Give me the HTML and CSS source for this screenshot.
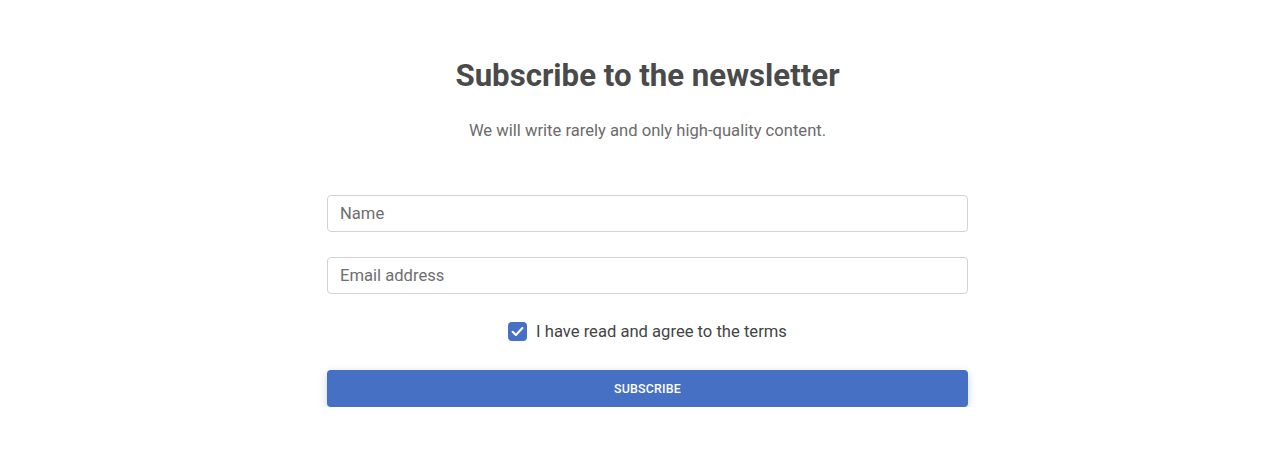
FILE: index.html
```html
<!DOCTYPE html>
<html lang="en">
<head>
  <meta charset="UTF-8">
  <title>Newsletter</title>
  <link rel="stylesheet" href="styles.css">
</head>
<body>
  <div class="container">
    <h1 class="title">Subscribe to the newsletter</h1>
    <p class="subtitle">We will write rarely and only high-quality content.</p>

    <form class="form">
      <input class="field" type="text" placeholder="Name">
      <input class="field" type="email" placeholder="Email address">

      <label class="agree">
        <span class="check">
          <svg width="13" height="11" viewBox="0 0 13 11"><path d="M1.6 5.8 L4.9 9 L11.4 2" fill="none" stroke="#fff" stroke-width="2.1" stroke-linecap="round" stroke-linejoin="round"/></svg>
        </span>
        I have read and agree to the terms
      </label>

      <button class="subscribe-btn" type="button">Subscribe</button>
    </form>
  </div>
</body>
</html>
```

FILE: styles.css
```css
:root {
  --color-primary: #4670c4;
  --color-text: #4d4d4d;
  --color-muted: #6b6b6b;
  --color-border: #d3d3d3;
}
* { box-sizing: border-box; margin: 0; padding: 0; }
body {
  font-family: Roboto, "Liberation Sans", sans-serif;
  background: #fff;
  color: var(--color-text);
  padding: 56px 0 0 15px;
  display: flex;
  justify-content: center;
}
.container { width: 641px; text-align: center; }

.title {
  font-size: 31.2px; font-weight: 700;
  color: #4a4a4a; line-height: 40px;
}
.subtitle {
  font-size: 16.6px; color: var(--color-muted);
  margin-top: 24px; line-height: 22px;
}

.form { margin-top: 53px; display: flex; flex-direction: column; }
.field {
  height: 37px; width: 100%;
  border: 1px solid var(--color-border); border-radius: 4px;
  padding: 0 12px;
  font-family: inherit; font-size: 16.6px; color: var(--color-text);
}
.field::placeholder { color: #6e6e6e; }
.field + .field { margin-top: 25px; }

.agree {
  display: flex; align-items: center; justify-content: center;
  gap: 9px; margin-top: 28px;
  font-size: 16.6px; color: #444;
}
.check {
  width: 19px; height: 19px; border-radius: 4px;
  background: var(--color-primary);
  display: flex; align-items: center; justify-content: center;
}

.subscribe-btn {
  margin-top: 29px; height: 37px; width: 100%;
  background: var(--color-primary); color: #fff;
  border: none; border-radius: 4px;
  font-family: inherit; font-size: 12.4px; font-weight: 500;
  text-transform: uppercase; letter-spacing: .2px;
  box-shadow: 0 3px 8px rgba(70,112,196,.3);
}
```
